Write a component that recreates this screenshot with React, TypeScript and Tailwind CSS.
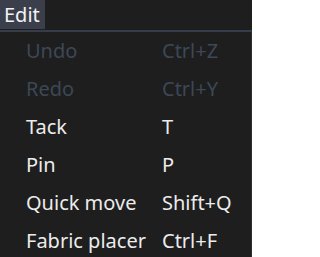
import React from "react";

const items: { label: string; shortcut: string; disabled?: boolean }[] = [
  { label: "Undo", shortcut: "Ctrl+Z", disabled: true },
  { label: "Redo", shortcut: "Ctrl+Y", disabled: true },
  { label: "Tack", shortcut: "T" },
  { label: "Pin", shortcut: "P" },
  { label: "Quick move", shortcut: "Shift+Q" },
  { label: "Fabric placer", shortcut: "Ctrl+F" },
];

export default function App() {
  return (
    <div
      className="w-[252px] h-[257px] bg-[#1e1e1e] overflow-hidden flex flex-col"
      style={{ fontFamily: '"Noto Sans", "Open Sans", sans-serif' }}
    >
      <div className="h-[30px] flex shrink-0">
        <div className="w-[45px] h-[29px] bg-[#3b3f4c] text-[#f2f2f2] text-[20px] leading-[29px] pl-[4px]">
          Edit
        </div>
      </div>
      <div className="h-[2px] bg-[#363c4a] shrink-0" />
      <div className="flex-1 border-r border-[#2a2d33] flex flex-col">
        {items.map((it) => (
          <div
            key={it.label}
            className={`h-[38px] flex items-center text-[20px] ${
              it.disabled ? "text-[#3c4856]" : "text-[#ececec]"
            }`}
          >
            <span className="w-[162px] pl-[26px]">{it.label}</span>
            <span>{it.shortcut}</span>
          </div>
        ))}
      </div>
    </div>
  );
}
